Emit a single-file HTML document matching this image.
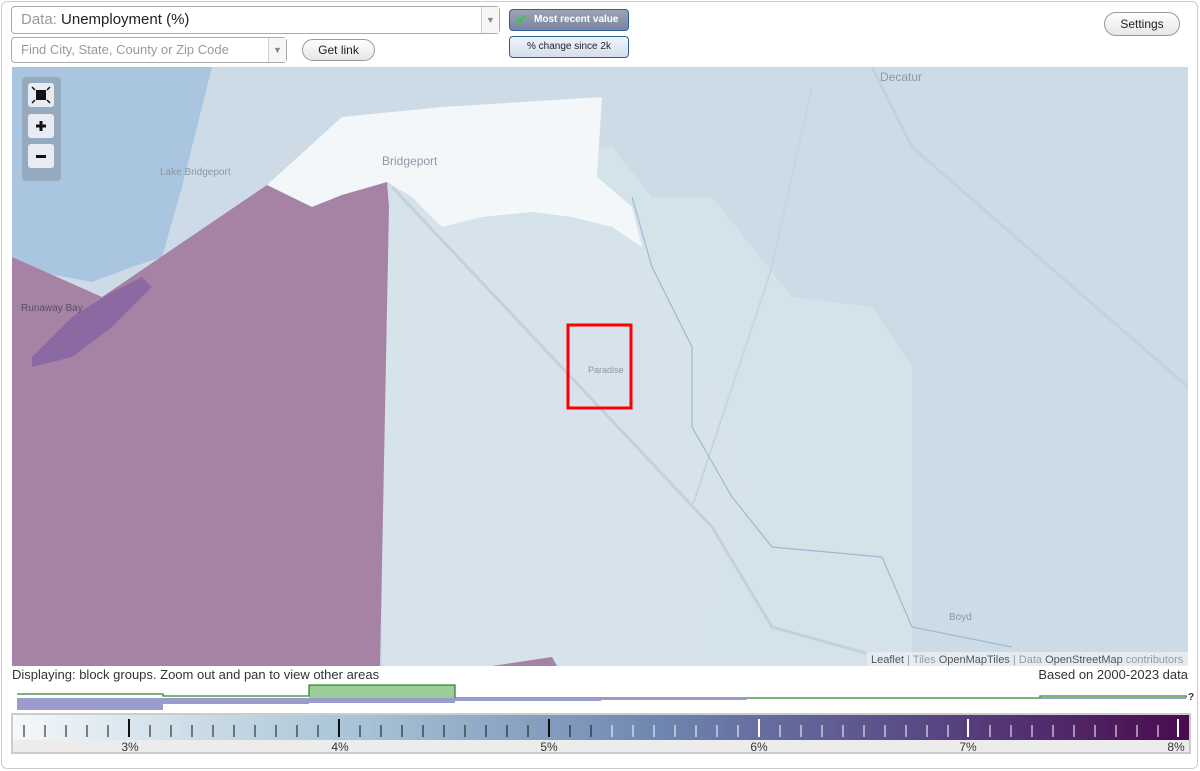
<!DOCTYPE html>
<html><head><meta charset="utf-8"><style>
*{box-sizing:border-box}
body{margin:0;width:1200px;height:771px;background:#fff;font-family:"Liberation Sans",sans-serif;overflow:hidden;position:relative}
.frame{position:absolute;left:1px;top:1px;width:1197px;height:768px;border:1px solid #ccc;border-radius:6px}
.sel{position:absolute;border:1px solid #aaa;border-radius:4px;background:#fff;color:#999}
.arr{position:absolute;right:0;top:0;width:18px;height:100%;border-left:1px solid #ccc;color:#888;font-size:9px;text-align:center;background:#f6f6f6}
.btn{position:absolute;border:1px solid #999;border-radius:12px;background:linear-gradient(#fff,#e6e6e6);font-size:12px;text-align:center;color:#222}
.abs{position:absolute}
</style></head><body>
<div class="frame"></div>
<div class="sel" style="left:11px;top:6px;width:489px;height:28px;font-size:15px;line-height:26px;padding-left:9px">Data: <span style="color:#222">Unemployment (%)</span><div class="arr" style="line-height:26px">▼</div></div>
<div class="sel" style="left:11px;top:37px;width:276px;height:26px;font-size:13px;line-height:24px;padding-left:9px">Find City, State, County or Zip Code<div class="arr" style="line-height:24px">▼</div></div>
<div class="btn" style="left:302px;top:39px;width:73px;height:22px;line-height:20px">Get link</div>
<div class="abs" style="left:509px;top:9px;width:120px;height:22px;border:1px solid #2c5f9a;border-radius:4px;background:linear-gradient(#9aa3b8,#7a85a0);color:#fff;font-size:10px;font-weight:bold;line-height:20px;padding-left:24px">Most recent value<span style="position:absolute;left:6px;top:0;color:#3c3;font-size:13px">✔</span></div>
<div class="abs" style="left:509px;top:36px;width:120px;height:22px;border:1px solid #2c5f9a;border-radius:4px;background:linear-gradient(#f0f4fb,#d4deec);color:#223;font-size:10px;line-height:20px;text-align:center">% change since 2k</div>
<div class="btn" style="left:1104px;top:12px;width:76px;height:24px;line-height:22px">Settings</div>

<svg class="abs" style="left:12px;top:67px" width="1176" height="599" viewBox="0 0 1176 599">
<rect width="1176" height="599" fill="#cddbe6"/>
<polygon points="0,0 200,0 185,60 170,120 150,190 120,200 80,215 0,200" fill="#a9c5e0"/>
<polygon points="370,120 600,80 640,130 700,130 780,230 860,240 900,300 900,599 370,599" fill="#d4e2ea"/>
<polygon points="370,140 630,170 690,280 740,430 680,599 370,599" fill="#d6e3eb"/>
<polygon points="330,50 430,40 590,30 585,110 620,140 630,180 600,160 560,150 520,145 470,150 430,160 400,130 375,115 330,128 300,140 255,118" fill="#f3f7fa"/>
<polygon points="0,190 90,230 255,118 300,140 330,128 375,115 377,140 368,599 0,599" fill="#a682a4"/>
<polygon points="20,290 60,250 100,225 130,210 140,220 100,260 60,290 20,300" fill="#8b6aa3"/>
<polygon points="480,599 540,590 545,599" fill="#a682a4"/>
<path d="M380,120 L700,460 L760,560 L900,599" stroke="#c4d1db" stroke-width="3" fill="none"/>
<path d="M860,0 L900,80 L1176,320" stroke="#c4d1db" stroke-width="3" fill="none"/>
<path d="M800,20 L760,200 L680,440" stroke="#c8d5df" stroke-width="2" fill="none"/>
<path d="M620,130 L640,200 L680,280 L680,360 L720,430 L760,480 L870,490 L900,560 L1000,580" stroke="#9fb8d6" stroke-width="1.2" fill="none"/>
<rect x="556" y="258" width="63" height="83" fill="none" stroke="#f00" stroke-width="3"/>
<text x="370" y="98" font-size="12" fill="#8c98a4" font-family="Liberation Sans">Bridgeport</text>
<text x="148" y="108" font-size="10" fill="#8c98a4" font-family="Liberation Sans">Lake Bridgeport</text>
<text x="9" y="244" font-size="10" fill="#5a5060" font-family="Liberation Sans">Runaway Bay</text>
<text x="576" y="306" font-size="9" fill="#8c98a4" font-family="Liberation Sans">Paradise</text>
<text x="868" y="14" font-size="12" fill="#8c98a4" font-family="Liberation Sans">Decatur</text>
<text x="937" y="553" font-size="10" fill="#8c98a4" font-family="Liberation Sans">Boyd</text>
<rect x="10" y="10" width="39" height="104" rx="4" fill="#8a98a8" opacity=".6"/>
<rect x="16" y="16" width="26" height="24" rx="3" fill="#e8ecf2"/>
<rect x="24" y="23" width="10" height="10" fill="#111"/>
<path d="M20,20l3,3M38,20l-3,3M20,36l3,-3M38,36l-3,-3" stroke="#111" stroke-width="1.5"/>
<rect x="16" y="47" width="26" height="24" rx="3" fill="#e8ecf2"/>
<path d="M29,54v10M24,59h10" stroke="#111" stroke-width="3"/>
<rect x="16" y="77" width="26" height="24" rx="3" fill="#e8ecf2"/>
<rect x="24" y="88" width="10" height="3" fill="#111"/>
<rect x="855" y="585" width="321" height="14" fill="#e8eef3" opacity=".85"/>
<text x="859" y="596" font-size="11" fill="#999" font-family="Liberation Sans"><tspan fill="#555">Leaflet</tspan> | Tiles <tspan fill="#555">OpenMapTiles</tspan> | Data <tspan fill="#555">OpenStreetMap</tspan> contributors</text>
</svg>
<div class="abs" style="left:12px;top:667px;font-size:13px;color:#333">Displaying: block groups. Zoom out and pan to view other areas</div>
<div class="abs" style="right:12px;top:667px;font-size:13px;color:#333">Based on 2000-2023 data</div>
<svg class="abs" style="left:0;top:680px" width="1200" height="34">
<rect x="309" y="5" width="146" height="13" fill="#9ccc99"/>
<path d="M17,14 H163 V16 H309 V5 H455 V18 H1040 V16 H1186 V18" stroke="#2a8a2a" fill="none" stroke-width="1.3"/>
<rect x="17" y="18" width="146" height="12" fill="#9a9ccc"/>
<rect x="163" y="18" width="146" height="6" fill="#9a9ccc"/>
<rect x="309" y="18" width="146" height="5" fill="#9a9ccc"/>
<rect x="455" y="18" width="146" height="3" fill="#9a9ccc"/>
<rect x="601" y="18" width="146" height="2" fill="#9a9ccc"/>
<rect x="1040" y="17" width="146" height="2" fill="#9a9ccc"/>
<text x="1188" y="20" font-size="10" font-weight="bold" fill="#333">?</text>
</svg>
<div class="abs" style="left:11px;top:713px;width:1180px;height:41px;border:2px solid #ccc;background:#ececec"></div>
<svg class="abs" style="left:13px;top:715px" width="1176" height="37">
<defs><linearGradient id="g" x1="0" x2="1"><stop offset="0" stop-color="#f4f8fa"/><stop offset=".3" stop-color="#a6c2d6"/><stop offset=".55" stop-color="#6e86b0"/><stop offset=".8" stop-color="#56417f"/><stop offset="1" stop-color="#4a0a4e"/></linearGradient></defs>
<rect width="1176" height="25" fill="url(#g)"/>
<g font-size="12" fill="#333" font-family="Liberation Sans" text-anchor="middle">
<text x="117" y="36">3%</text><text x="327" y="36">4%</text><text x="536" y="36">5%</text><text x="746" y="36">6%</text><text x="955" y="36">7%</text><text x="1163" y="36">8%</text></g>
<g stroke-width="1">
<path d="M11,10v12M32,10v12M53,10v12M74,10v12M95,10v12M137,10v12M158,10v12M179,10v12M200,10v12M221,10v12M242,10v12M263,10v12M284,10v12M305,10v12M347,10v12M368,10v12M389,10v12M410,10v12M431,10v12M452,10v12M473,10v12M494,10v12M515,10v12M557,10v12M578,10v12" stroke="#111"/>
<path d="M116,4v18M326,4v18M536,4v18" stroke="#111" stroke-width="2"/>
<path d="M599,10v12M620,10v12M641,10v12M662,10v12M683,10v12M704,10v12M725,10v12M767,10v12M788,10v12M809,10v12M830,10v12M851,10v12M872,10v12M893,10v12M914,10v12M935,10v12M977,10v12M998,10v12M1019,10v12M1040,10v12M1061,10v12M1082,10v12M1103,10v12M1124,10v12M1145,10v12" stroke="#fff"/>
<path d="M746,4v18M955,4v18M1165,4v18" stroke="#fff" stroke-width="2"/>
</g>
</svg>
</body></html>
